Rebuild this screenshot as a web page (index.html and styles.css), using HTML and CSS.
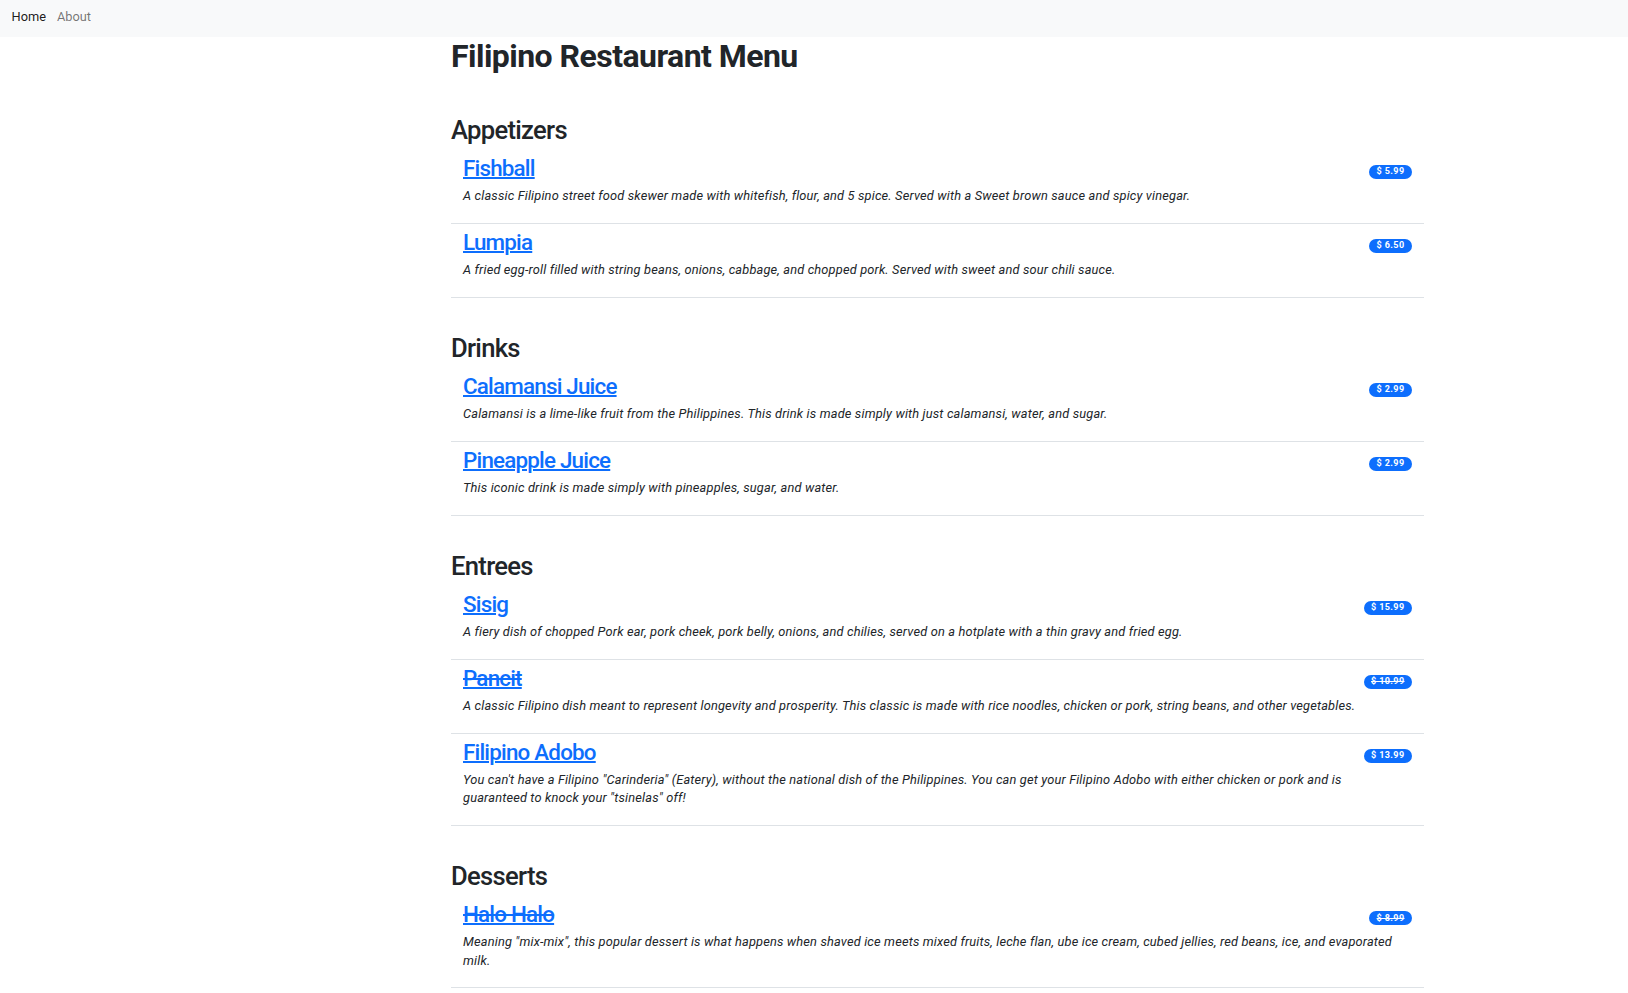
FILE: index.html
```html
<!DOCTYPE html>
<html lang="en">
<head>
<meta charset="utf-8">
<title>Filipino Restaurant Menu</title>
<link rel="stylesheet" href="styles.css">
</head>
<body>
<nav class="navbar">
  <a class="nav-link active" href="#">Home</a>
  <a class="nav-link" href="#">About</a>
</nav>
<main class="menu">
  <h1 class="menu-title">Filipino Restaurant Menu</h1>

  <section class="menu-section">
    <h2 class="section-title">Appetizers</h2>
    <div class="item">
      <div class="item-head"><a class="item-name" href="#">Fishball</a><span class="badge">$ 5.99</span></div>
      <p class="item-desc">A classic Filipino street food skewer made with whitefish, flour, and 5 spice. Served with a Sweet brown sauce and spicy vinegar.</p>
    </div>
    <div class="item">
      <div class="item-head"><a class="item-name" href="#">Lumpia</a><span class="badge">$ 6.50</span></div>
      <p class="item-desc">A fried egg-roll filled with string beans, onions, cabbage, and chopped pork. Served with sweet and sour chili sauce.</p>
    </div>
  </section>

  <section class="menu-section">
    <h2 class="section-title">Drinks</h2>
    <div class="item">
      <div class="item-head"><a class="item-name" href="#">Calamansi Juice</a><span class="badge">$ 2.99</span></div>
      <p class="item-desc">Calamansi is a lime-like fruit from the Philippines. This drink is made simply with just calamansi, water, and sugar.</p>
    </div>
    <div class="item">
      <div class="item-head"><a class="item-name" href="#">Pineapple Juice</a><span class="badge">$ 2.99</span></div>
      <p class="item-desc">This iconic drink is made simply with pineapples, sugar, and water.</p>
    </div>
  </section>

  <section class="menu-section">
    <h2 class="section-title">Entrees</h2>
    <div class="item">
      <div class="item-head"><a class="item-name" href="#">Sisig</a><span class="badge">$ 15.99</span></div>
      <p class="item-desc">A fiery dish of chopped Pork ear, pork cheek, pork belly, onions, and chilies, served on a hotplate with a thin gravy and fried egg.</p>
    </div>
    <div class="item unavailable">
      <div class="item-head"><a class="item-name" href="#">Pancit</a><span class="badge">$ 10.99</span></div>
      <p class="item-desc">A classic Filipino dish meant to represent longevity and prosperity. This classic is made with rice noodles, chicken or pork, string beans, and other vegetables.</p>
    </div>
    <div class="item">
      <div class="item-head"><a class="item-name" href="#">Filipino Adobo</a><span class="badge">$ 13.99</span></div>
      <p class="item-desc">You can't have a Filipino "Carinderia" (Eatery), without the national dish of the Philippines. You can get your Filipino Adobo with either chicken or pork and is guaranteed to knock your "tsinelas" off!</p>
    </div>
  </section>

  <section class="menu-section">
    <h2 class="section-title">Desserts</h2>
    <div class="item unavailable">
      <div class="item-head"><a class="item-name" href="#">Halo Halo</a><span class="badge">$ 8.99</span></div>
      <p class="item-desc">Meaning "mix-mix", this popular dessert is what happens when shaved ice meets mixed fruits, leche flan, ube ice cream, cubed jellies, red beans, ice, and evaporated milk.</p>
    </div>
  </section>
</main>
</body>
</html>
```

FILE: styles.css
```css
* { box-sizing: border-box; }

body {
  margin: 0;
  font-family: Roboto, "Liberation Sans", sans-serif;
  color: #212529;
  background: #fff;
  font-size: 12.8px;
  line-height: 1.5;
}

.navbar {
  display: flex;
  gap: 11px;
  height: 37px;
  padding: 6.5px 12px 0 11.5px;
  background: #f8f9fa;
  line-height: 19.2px;
}

.nav-link {
  color: rgba(0, 0, 0, 0.55);
  text-decoration: none;
  font-size: 12.8px;
}

.nav-link.active {
  color: rgba(0, 0, 0, 0.9);
}

.menu {
  display: flex;
  flex-direction: column;
  margin-left: 451px;
  width: 973px;
}

.menu-title {
  margin: 0.2px 0 4.1px;
  font-size: 32px;
  line-height: 38.4px;
  font-weight: 700;
  letter-spacing: -0.54px;
}

.menu-section {
  margin-top: 35.5px;
}

.section-title {
  margin: 0 0 3.9px;
  font-size: 25.6px;
  line-height: 30.72px;
  font-weight: 500;
  letter-spacing: -0.7px;
}

.item {
  padding: 4.9px 12px 6.4px;
  border-bottom: 1px solid #dee2e6;
}

.item-head {
  display: flex;
  justify-content: space-between;
  align-items: flex-start;
}

.item-name {
  font-size: 22.4px;
  line-height: 26.88px;
  font-weight: 500;
  letter-spacing: -0.8px;
  color: #0d6efd;
  text-decoration: underline;
  text-decoration-thickness: 1.5px;
  text-underline-offset: 1px;
}

.badge {
  margin-top: 10px;
  padding: 2.7px 7.5px;
  font-size: 9px;
  font-weight: 700;
  line-height: 1;
  letter-spacing: 0.4px;
  color: #fff;
  background: #0d6efd;
  border-radius: 50rem;
  white-space: nowrap;
}

.item-desc {
  margin: 5.5px 4px 11px 0;
  font-size: 12.8px;
  line-height: 18.3px;
  font-style: italic;
  letter-spacing: 0.17px;
}

.unavailable .item-name {
  text-decoration: underline line-through;
}

.unavailable .badge {
  text-decoration: line-through;
}
```
